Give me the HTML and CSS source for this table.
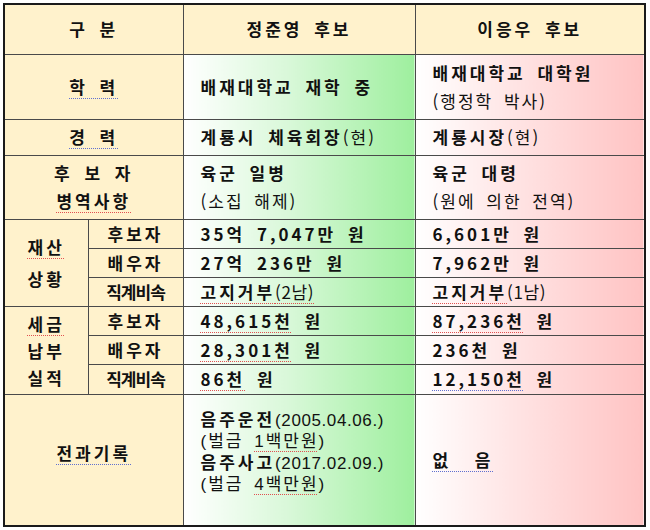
FILE: index.html
```html
<!DOCTYPE html>
<html lang="ko">
<head>
<meta charset="utf-8">
<title>후보 비교</title>
<link rel="stylesheet" href="styles.css">
</head>
<body>
<table class="cmp">
  <colgroup>
    <col class="c-a"><col class="c-b"><col class="c-c"><col class="c-d">
  </colgroup>
  <tr class="r-head">
    <th colspan="2" class="lab">구&ensp;분</th>
    <th class="lab">정준영 후보</th>
    <th class="lab">이응우 후보</th>
  </tr>
  <tr class="r-edu">
    <td colspan="2" class="lab"><span class="sq-b">학&ensp;력</span></td>
    <td class="g">배재대학교 재학 중</td>
    <td class="p">배재대학교 대학원<br><span class="n">(행정학 박사)</span></td>
  </tr>
  <tr class="r-car">
    <td colspan="2" class="lab"><span class="sq-b">경&ensp;력</span></td>
    <td class="g">계룡시 체육회장<span class="n">(현)</span></td>
    <td class="p">계룡시장<span class="n">(현)</span></td>
  </tr>
  <tr class="r-mil">
    <td colspan="2" class="lab">후 보 자<br><span class="sq-r">병역사항</span></td>
    <td class="g">육군 일병<br><span class="n">(소집 해제)</span></td>
    <td class="p">육군 대령<br><span class="n">(원에 의한 전역)</span></td>
  </tr>
  <tr class="r-s">
    <td rowspan="3" class="lab grp grp-prop"><span class="sq-r">재산</span><br>상황</td>
    <td class="lab">후보자</td>
    <td class="g">35억 7,047만 원</td>
    <td class="p">6,601만 원</td>
  </tr>
  <tr class="r-s">
    <td class="lab">배우자</td>
    <td class="g">27억 236만 원</td>
    <td class="p">7,962만 원</td>
  </tr>
  <tr class="r-s">
    <td class="lab cond">직계비속</td>
    <td class="g"><span class="sq-r">고지거부<span class="n nd">(2남)</span></span></td>
    <td class="p"><span class="sq-r">고지거부</span><span class="n nd">(1남)</span></td>
  </tr>
  <tr class="r-s">
    <td rowspan="3" class="lab grp grp-tax"><span class="sq-r">세금</span><br>납부<br>실적</td>
    <td class="lab">후보자</td>
    <td class="g"><span class="sq-r">48,615천</span> 원</td>
    <td class="p"><span class="sq-r">87,236천</span> 원</td>
  </tr>
  <tr class="r-s">
    <td class="lab">배우자</td>
    <td class="g"><span class="sq-r">28,301천</span> 원</td>
    <td class="p">236천 원</td>
  </tr>
  <tr class="r-s r-s-last">
    <td class="lab cond">직계비속</td>
    <td class="g"><span class="sq-r">86천</span> 원</td>
    <td class="p"><span class="sq-b">12,150천</span> 원</td>
  </tr>
  <tr class="r-crim">
    <td colspan="2" class="lab crim-lab"><span class="sq-b">전과기록</span></td>
    <td class="g crim"><div class="ln">음주운전<span class="n nd">(2005.04.06.)</span></div><div class="ln n">(벌금 <span class="sq-r">1백만원</span>)</div><div class="ln">음주사고<span class="n nd">(2017.02.09.)</span></div><div class="ln n">(벌금 <span class="sq-r">4백만원</span>)</div></td>
    <td class="p"><span class="sq-b">없&nbsp;&nbsp;음</span></td>
  </tr>
</table>
</body>
</html>
```

FILE: styles.css
```css
html, body {
  margin: 0;
  padding: 0;
  background: #ffffff;
}
body {
  padding: 3px;
  font-family: "Noto Sans CJK KR", "Noto Sans", sans-serif;
  color: #111111;
}
.cmp {
  border-collapse: collapse;
  table-layout: fixed;
  width: 641px;
  border: 2px solid #1a1a1a;
  font-size: 17px;
  font-weight: 700;
  letter-spacing: 3px;
  word-spacing: 4px;
  line-height: 28px;
}
.c-a { width: 84px; }
.c-b { width: 95px; }
.c-c { width: 232px; }
.c-d { width: 230px; }
.cmp th, .cmp td {
  border: 1px solid #4a4a4a;
  padding: 0;
  vertical-align: middle;
  white-space: nowrap;
}
.lab {
  background: #fff2cc;
  text-align: center;
  font-weight: 700;
}
.g {
  background: linear-gradient(to right, #ffffff 0%, #d9f8d9 45%, #9eef9e 100%);
  padding-left: 17px !important;
  text-align: left;
}
.p {
  background: linear-gradient(to right, #ffffff 0%, #ffe3e3 45%, #ffc3c3 100%);
  padding-left: 17px !important;
  text-align: left;
}
.n {
  font-weight: 400;
  letter-spacing: 2px;
}
.nd {
  letter-spacing: 0.6px;
  word-spacing: 0;
}
.r-head { height: 50px; }
.r-edu { height: 65px; }
.r-car { height: 36px; }
.r-mil { height: 64px; }
.r-s { height: 29px; }
.r-s-last { height: 30px; }
.r-crim { height: 132px; }
.grp-prop { line-height: 32px; }
.grp-tax { line-height: 27px; }
.cond { letter-spacing: -1px; }
.crim {
  padding-bottom: 14px !important;
  font-family: "Liberation Sans", "Noto Sans CJK KR", sans-serif;
}
.ln { height: 21.5px; line-height: 21.5px; }
.crim-lab { padding-bottom: 14px !important; }
.sq-r, .sq-b {
  text-decoration-line: underline;
  text-decoration-style: dotted;
  text-decoration-thickness: 1px;
  text-underline-offset: 4px;
}
.sq-r { text-decoration-color: #e05050; }
.sq-b { text-decoration-color: #6070d0; }
```
